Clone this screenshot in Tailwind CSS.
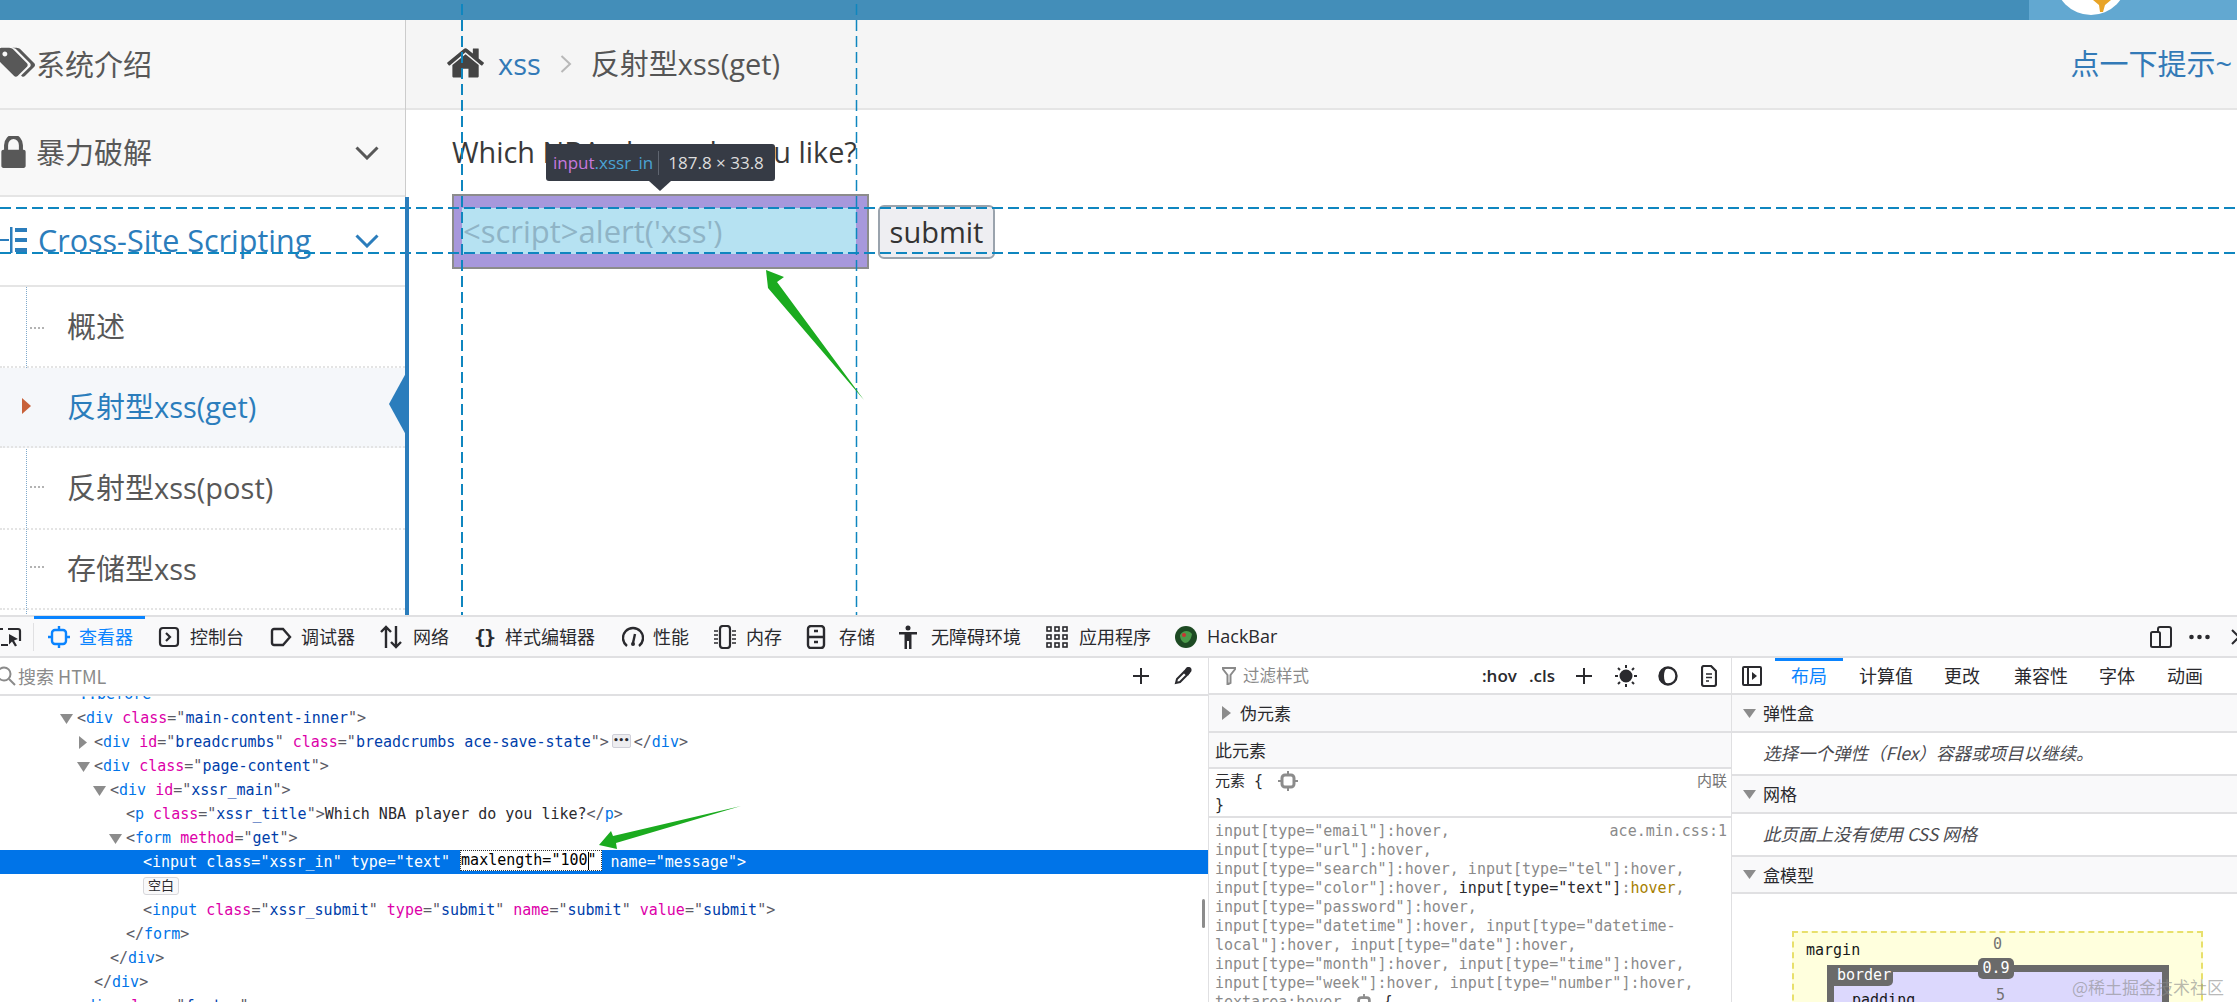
<!DOCTYPE html>
<html lang="en">
<head>
<meta charset="UTF-8">
<title>xss inspector</title>
<script src="https://cdn.jsdelivr.net/npm/@tailwindcss/browser@4"></script>
</head>
<body class="bg-white">
<div class="relative w-[2237px] h-[1002px] overflow-hidden bg-white text-[#393939] [font-family:'Open_Sans','Noto_Sans_CJK_SC',sans-serif]">

  <!-- page header -->
  <div class="flex h-[20px] bg-[#438eb9]">
    <div class="flex-1"></div>
    <div class="relative w-[208px] overflow-hidden bg-[#62a8d1]">
      <div class="absolute left-[26px] top-[-57px] w-[72px] h-[72px] rounded-full bg-white"></div>
      <svg class="absolute left-[62px] top-0" width="22" height="12" viewBox="0 0 22 12"><path d="M2 0h18l-6 5-2 7h-3l-1-7z" fill="#e8a427"/></svg>
    </div>
  </div>

  <!-- page body -->
  <div class="flex h-[595px]">
    <!-- sidebar -->
    <div class="w-[406px] shrink-0 border-r border-[#cccccc] text-[29px] text-[#585858]">
      <div class="flex items-center h-[90px] pt-[2px] bg-[#f8f8f8] border-b-[2px] border-[#e5e5e5]">
        <svg class="w-[35px] h-[35px] -mt-[6px] shrink-0" viewBox="0 0 1835 1792" fill="#585858"><path d="M384 448q0-53-37.500-90.500t-90.500-37.500-90.500 37.500-37.500 90.500 37.500 90.500 90.500 37.500 90.500-37.500 37.500-90.500zm1067 576q0 53-37 90l-491 492q-39 37-91 37-53 0-90-37l-715-716q-38-37-64.500-101t-26.500-117v-416q0-52 38-90t90-38h416q53 0 117 26.500t102 64.500l715 714q37 39 37 91zm384 0q0 53-37 90l-491 492q-39 37-91 37-36 0-59-14t-53-45l470-470q37-37 37-90 0-52-37-91l-715-714q-38-38-102-64.500t-117-26.500h224q53 0 117 26.500t102 64.500l715 714q37 39 37 91z"/></svg>
        <span class="ml-px">系统介绍</span>
      </div>
      <div class="flex items-center h-[87px] bg-[#f8f8f8] border-b-[2px] border-[#e5e5e5]">
        <svg class="w-[27px] h-[32px] -mt-[2px] shrink-0" viewBox="256 190 1280 1350" fill="#585858" preserveAspectRatio="none"><path d="M640 768h512v-192q0-106-75-181t-181-75-181 75-75 181v192zm832 96v576q0 40-28 68t-68 28h-960q-40 0-68-28t-28-68v-576q0-40 28-68t68-28h32v-192q0-184 132-316t316-132 316 132 132 316v192h32q40 0 68 28t28 68z"/></svg>
        <span class="ml-[9px]">暴力破解</span>
        <svg class="ml-auto mr-[26px] shrink-0" width="24" height="14" viewBox="0 0 24 14" fill="none" stroke="#585858" stroke-width="3"><path d="M1.500 1.500 12 12 22.500 1.500"/></svg>
      </div>
      <div class="flex items-center h-[90px] text-[#2b7dbc] border-b-[2px] border-[#e5e5e5]">
        <svg class="shrink-0 -mt-[2px]" width="30" height="30" viewBox="0 0 30 30" fill="#2b7dbc"><rect x="0" y="14" width="9" height="2"/><rect x="10" y="2" width="2.500" height="26"/><rect x="15" y="3" width="12" height="4"/><rect x="15" y="13" width="12" height="4"/><rect x="15" y="23" width="12" height="4"/></svg>
        <span class="ml-[8px] text-[30.500px]">Cross-Site Scripting</span>
        <svg class="ml-auto mr-[26px] shrink-0" width="24" height="14" viewBox="0 0 24 14" fill="none" stroke="#2b7dbc" stroke-width="3"><path d="M1.500 1.500 12 12 22.500 1.500"/></svg>
      </div>
      <div class="relative h-[327px]">
        <div class="absolute left-[26px] top-0 bottom-0 border-l border-dotted border-[#7fa9cc]"></div>
        <div class="flex items-center h-[81px] pl-[67px] border-b-2 border-dotted border-[#e4e4e4]">
          <span class="absolute left-[30px] top-[40px] w-[14px] border-t-2 border-dotted border-[#b3b3b3]"></span>概述
        </div>
        <div class="relative flex items-center h-[80px] pl-[67px] bg-[#f5f7fa] text-[#2b7dbc] border-b-2 border-dotted border-[#e4e4e4]">
          <svg class="absolute left-[22px] top-[30px]" width="9" height="16" viewBox="0 0 9 16"><path d="M0 0 9 8 0 16z" fill="#c86139"/></svg>
          反射型xss(get)
        </div>
        <div class="relative flex items-center h-[82px] pl-[67px] border-b-2 border-dotted border-[#e4e4e4]">
          <span class="absolute left-[30px] top-[38px] w-[14px] border-t-2 border-dotted border-[#b3b3b3]"></span>反射型xss(post)
        </div>
        <div class="relative flex items-center h-[80px] pl-[67px] border-b-2 border-dotted border-[#e4e4e4]">
          <span class="absolute left-[30px] top-[36px] w-[14px] border-t-2 border-dotted border-[#b3b3b3]"></span>存储型xss
        </div>
      </div>
    </div>

    <!-- main content -->
    <div class="flex-1 flex flex-col">
      <div class="flex items-center h-[90px] pl-[40px] pr-[5px] bg-[#f5f5f5] border-b-[2px] border-[#e5e5e5] text-[29px]">
        <svg class="shrink-0 -mt-[3px]" width="42" height="38" viewBox="0 0 1792 1664" fill="#444444"><path d="M1408 928v480q0 26-19 45t-45 19h-384v-384h-256v384h-384q-26 0-45-19t-19-45v-480q0-1 .5-3t.5-3l575-474 575 474q1 2 1 6zm223-69l-62 74q-8 9-21 11h-3q-13 0-21-7l-692-577-692 577q-12 8-24 7-13-2-21-11l-62-74q-8-10-7-23.500t11-21.500l719-599q32-26 76-26t76 26l244 204v-195q0-14 9-23t23-9h192q14 0 23 9t9 23v408l219 182q10 8 11 21.500t-7 23.500z"/></svg>
        <span class="ml-[10px] text-[#337ab7]">xss</span>
        <svg class="ml-[19px] shrink-0" width="12" height="18" viewBox="0 0 12 18" fill="none" stroke="#b8b8b8" stroke-width="2"><path d="M1.500 1 10 9l-8.500 8"/></svg>
        <span class="ml-[19px] text-[#555555]">反射型xss(get)</span>
        <span class="ml-auto text-[#337ab7]">点一下提示~</span>
      </div>
      <div class="pl-[46px] pt-[22px]">
        <p class="h-[40px] leading-[40px] text-[28.800px] text-[#393939]">Which NBA player do you like?</p>
        <form class="flex items-center mt-[22px] gap-[9px]">
          <div class="w-[417px] h-[75px] pl-[8px] pr-[11px] py-[12px] bg-[#a798dc] border-2 border-[#8c8c8c]">
            <div class="flex items-center h-[46px] pl-[1px] bg-[#b6e2f2] text-[31px] text-[#8fb4c6] whitespace-pre">&lt;script&gt;alert('xss')</div>
          </div>
          <div class="flex items-center justify-center w-[117px] h-[54px] bg-[#eeeef2] border-2 border-[#9aa3ad] rounded-[6px] text-[29px] text-[#333333]">submit</div>
        </form>
      </div>
    </div>
  </div>

  <!-- devtools -->
  <div class="flex flex-col h-[387px] border-t-2 border-[#e0e0e2] bg-white text-[18px] text-[#2a2a2e] [font-family:'Noto_Sans_CJK_SC','Open_Sans',sans-serif]">
    <div class="flex items-center h-[41px] bg-[#f9f9fa] border-b-2 border-[#e0e0e2]">
      <svg class="shrink-0" width="22" height="22" viewBox="0 0 22 22" fill="none" stroke="#2a2a2e" stroke-width="2.200"><path d="M8 3h10a2 2 0 0 1 2 2v10M0 3h3M8 19H1"/><path d="M9 8l9 5-4 1.500 3 5-2 1-3-5-3 3z" fill="#2a2a2e" stroke="none"/></svg>
      <div class="ml-[11px] w-px h-[28px] bg-[#e0e0e2]"></div>
      <div class="relative flex items-center w-[124px] h-full pl-[14px] text-[#0a84ff]">
        <span class="absolute left-0 top-[-1px] w-[111px] h-[3px] bg-[#0a84ff]"></span>
        <svg class="w-[22px] h-[22px] shrink-0" viewBox="0 0 22 22" fill="none" stroke="#0a84ff" stroke-width="2.400"><rect x="4" y="4" width="14" height="14" rx="3"/><path d="M11 0v4M11 18v4M0 11h4M18 11h4"/></svg>
        <span class="ml-[9px]">查看器</span>
      </div>
      <div class="flex items-center w-[112px] h-full">
        <svg class="w-[22px] h-[22px] shrink-0" viewBox="0 0 22 22" fill="none" stroke="#2a2a2e" stroke-width="2.200"><rect x="2" y="2" width="18" height="18" rx="3"/><path d="M8 7l4 4-4 4"/></svg>
        <span class="ml-[10px]">控制台</span>
      </div>
      <div class="flex items-center w-[110px] h-full">
        <svg class="w-[22px] h-[22px] shrink-0" viewBox="0 0 22 22" fill="none" stroke="#2a2a2e" stroke-width="2.400"><path d="M4 3h9l7 8-7 8H4a2 2 0 0 1-2-2V5a2 2 0 0 1 2-2z"/></svg>
        <span class="ml-[9px]">调试器</span>
      </div>
      <div class="flex items-center w-[93px] h-full">
        <svg class="w-[22px] h-[24px] shrink-0" viewBox="0 0 22 24" fill="none" stroke="#2a2a2e" stroke-width="2.400"><path d="M6 23V2M1 7l5-5 5 5M16 1v21M11 17l5 5 5-5"/></svg>
        <span class="ml-[11px]">网络</span>
      </div>
      <div class="flex items-center w-[149px] h-full">
        <span class="w-[22px] text-center font-bold [font-family:'DejaVu_Sans_Mono',monospace] tracking-[-2px] text-[20px]">{}</span>
        <span class="ml-[10px]">样式编辑器</span>
      </div>
      <div class="flex items-center w-[92px] h-full">
        <svg class="w-[22px] h-[24px] shrink-0" viewBox="0 0 22 24" fill="none" stroke="#2a2a2e" stroke-width="2.400"><path d="M5 21a10 10 0 1 1 12 0"/><path d="M13 9l-2 9"/><circle cx="11" cy="19" r="2" fill="#2a2a2e" stroke="none"/></svg>
        <span class="ml-[9px]">性能</span>
      </div>
      <div class="flex items-center w-[92px] h-full">
        <svg class="w-[22px] h-[24px] shrink-0" viewBox="0 0 22 24" fill="none" stroke="#2a2a2e" stroke-width="2.200"><rect x="6" y="1" width="10" height="22" rx="3"/><path d="M0 6h4M0 10h4M0 14h4M0 18h4M18 6h4M18 10h4M18 14h4M18 18h4" stroke-width="1.600"/></svg>
        <span class="ml-[10px]">内存</span>
      </div>
      <div class="flex items-center w-[92px] h-full">
        <svg class="w-[20px] h-[24px] shrink-0 mr-[2px]" viewBox="0 0 20 24" fill="none" stroke="#2a2a2e" stroke-width="2.400"><rect x="2" y="1" width="16" height="22" rx="3"/><path d="M2 12h16M8 6h4M8 17h4"/></svg>
        <span class="ml-[11px]">存储</span>
      </div>
      <div class="flex items-center w-[148px] h-full">
        <svg class="w-[20px] h-[24px] shrink-0 mr-[2px]" viewBox="0 0 20 24" fill="#2a2a2e"><circle cx="10" cy="3" r="2.500"/><path d="M1 7h18v2.500h-5.500V24h-2.500v-8H9v8H6.500V9.500H1z"/></svg>
        <span class="ml-[11px]">无障碍环境</span>
      </div>
      <div class="flex items-center w-[129px] h-full">
        <svg class="w-[22px] h-[22px] shrink-0" viewBox="0 0 22 22" fill="none" stroke="#2a2a2e" stroke-width="1.600"><rect x="1" y="1" width="4" height="4"/><rect x="9" y="1" width="4" height="4"/><rect x="17" y="1" width="4" height="4"/><rect x="1" y="9" width="4" height="4"/><rect x="9" y="9" width="4" height="4"/><rect x="17" y="9" width="4" height="4"/><rect x="1" y="17" width="4" height="4"/><rect x="9" y="17" width="4" height="4"/><rect x="17" y="17" width="4" height="4"/></svg>
        <span class="ml-[11px]">应用程序</span>
      </div>
      <div class="flex items-center h-full">
        <svg class="w-[22px] h-[22px] shrink-0" viewBox="0 0 22 22"><circle cx="11" cy="11" r="11" fill="#1d4a23"/><path d="M5 9c3-5 9-5 12-1-1 6-4 9-7 9-3-1-5-4-5-8z" fill="#4b9a4a"/><circle cx="9" cy="9" r="2" fill="#c33"/></svg>
        <span class="ml-[10px] [font-family:'Open_Sans',sans-serif]">HackBar</span>
      </div>
      <svg class="ml-auto shrink-0" width="22" height="22" viewBox="0 0 22 22" fill="none" stroke="#2a2a2e" stroke-width="2"><rect x="8" y="1" width="13" height="20" rx="2"/><rect x="1" y="6" width="9" height="15" rx="1.500" fill="#f9f9fa"/></svg>
      <svg class="ml-[17px] mr-[-2px] shrink-0" width="50" height="22" viewBox="0 0 50 22" fill="#2a2a2e"><circle cx="2.500" cy="11" r="2.300"/><circle cx="10.500" cy="11" r="2.300"/><circle cx="18.500" cy="11" r="2.300"/><path d="M43 4l7 7-7 7" fill="none" stroke="#2a2a2e" stroke-width="2"/></svg>
    </div>

    <div class="flex flex-1 min-h-0">
      <!-- markup pane -->
      <div class="relative flex flex-col w-[1208px] shrink-0">
        <div class="flex items-center h-[38px] shrink-0 bg-white border-b-2 border-[#e0e0e2] z-10">
          <svg class="-ml-[4px] shrink-0" width="20" height="20" viewBox="0 0 20 20" fill="none" stroke="#8a8a8a" stroke-width="2"><circle cx="8" cy="8" r="6.500"/><path d="M13 13l6 6"/></svg>
          <span class="ml-[2px] text-[#8a8a8a]">搜索 HTML</span>
          <svg class="ml-auto shrink-0" width="18" height="18" viewBox="0 0 18 18" stroke="#2a2a2e" stroke-width="2"><path d="M9 1v16M1 9h16"/></svg>
          <svg class="ml-[24px] mr-[16px] shrink-0" width="18" height="18" viewBox="0 0 18 18" fill="none" stroke="#2a2a2e" stroke-width="2"><path d="M11 3l4 4M2 16l1-4 7-7 3 3-7 7z"/><path d="M11 4l2-2.500c1-1 2.500-.5 3 0s1 2 0 3L14 7z" fill="#2a2a2e"/></svg>
        </div>
        <div class="-mt-[14px] text-[15px] leading-6 text-[#5b5b66] [font-family:'DejaVu_Sans_Mono','Noto_Sans_CJK_SC',monospace]">
          <div class="h-6 pl-[79px] whitespace-pre text-[#0074e8]">::before</div>
          <div class="h-6 pl-[77px] whitespace-pre"><svg class="inline -ml-[17px] mr-[4px]" width="13" height="10" viewBox="0 0 13 10"><path d="M0 0h13L6.500 10z" fill="#8c8c8c"/></svg>&lt;<span class="text-[#0074e8]">div</span> <span class="text-[#dd00a9]">class</span>="<span class="text-[#003eaa]">main-content-inner</span>"&gt;</div>
          <div class="h-6 pl-[94px] whitespace-pre"><svg class="inline -ml-[15px] mr-[7px]" width="8" height="13" viewBox="0 0 8 13"><path d="M0 0l8 6.500L0 13z" fill="#8c8c8c"/></svg>&lt;<span class="text-[#0074e8]">div</span> <span class="text-[#dd00a9]">id</span>="<span class="text-[#003eaa]">breadcrumbs</span>" <span class="text-[#dd00a9]">class</span>="<span class="text-[#003eaa]">breadcrumbs ace-save-state</span>"&gt;<span class="inline-block align-middle w-[19px] h-[14px] mx-[3px] -mt-[3px] bg-[#ededf0] border border-[#cfcfd8] rounded-[2px] text-center text-[9px] leading-[11px] font-bold text-[#2a2a2e]">•••</span>&lt;/<span class="text-[#0074e8]">div</span>&gt;</div>
          <div class="h-6 pl-[94px] whitespace-pre"><svg class="inline -ml-[17px] mr-[4px]" width="13" height="10" viewBox="0 0 13 10"><path d="M0 0h13L6.500 10z" fill="#8c8c8c"/></svg>&lt;<span class="text-[#0074e8]">div</span> <span class="text-[#dd00a9]">class</span>="<span class="text-[#003eaa]">page-content</span>"&gt;</div>
          <div class="h-6 pl-[110px] whitespace-pre"><svg class="inline -ml-[17px] mr-[4px]" width="13" height="10" viewBox="0 0 13 10"><path d="M0 0h13L6.500 10z" fill="#8c8c8c"/></svg>&lt;<span class="text-[#0074e8]">div</span> <span class="text-[#dd00a9]">id</span>="<span class="text-[#003eaa]">xssr_main</span>"&gt;</div>
          <div class="h-6 pl-[126px] whitespace-pre">&lt;<span class="text-[#0074e8]">p</span> <span class="text-[#dd00a9]">class</span>="<span class="text-[#003eaa]">xssr_title</span>"&gt;<span class="text-[#2a2a2e]">Which NBA player do you like?</span>&lt;/<span class="text-[#0074e8]">p</span>&gt;</div>
          <div class="h-6 pl-[126px] whitespace-pre"><svg class="inline -ml-[17px] mr-[4px]" width="13" height="10" viewBox="0 0 13 10"><path d="M0 0h13L6.500 10z" fill="#8c8c8c"/></svg>&lt;<span class="text-[#0074e8]">form</span> <span class="text-[#dd00a9]">method</span>="<span class="text-[#003eaa]">get</span>"&gt;</div>
          <div class="h-6 pl-[143px] whitespace-pre bg-[#0074e8] text-white">&lt;input class="xssr_in" type="text" <span class="inline-block align-top h-[21px] leading-[19px] pr-[4px] mr-[9px] ml-[1px] bg-white text-black border border-dotted border-[#333333]">maxlength="100"</span>name="message"&gt;</div>
          <div class="flex items-center h-6 pl-[143px]"><span class="flex items-center justify-center w-[36px] h-[18px] bg-[#f9f9fa] border border-[#d7d7db] rounded-[3px] text-[13px] text-[#2a2a2e]">空白</span></div>
          <div class="h-6 pl-[143px] whitespace-pre">&lt;<span class="text-[#0074e8]">input</span> <span class="text-[#dd00a9]">class</span>="<span class="text-[#003eaa]">xssr_submit</span>" <span class="text-[#dd00a9]">type</span>="<span class="text-[#003eaa]">submit</span>" <span class="text-[#dd00a9]">name</span>="<span class="text-[#003eaa]">submit</span>" <span class="text-[#dd00a9]">value</span>="<span class="text-[#003eaa]">submit</span>"&gt;</div>
          <div class="h-6 pl-[126px] whitespace-pre">&lt;/<span class="text-[#0074e8]">form</span>&gt;</div>
          <div class="h-6 pl-[110px] whitespace-pre">&lt;/<span class="text-[#0074e8]">div</span>&gt;</div>
          <div class="h-6 pl-[94px] whitespace-pre">&lt;/<span class="text-[#0074e8]">div</span>&gt;</div>
          <div class="h-6 pl-[77px] whitespace-pre">&lt;<span class="text-[#0074e8]">div</span> <span class="text-[#dd00a9]">class</span>="<span class="text-[#003eaa]">footer</span>"&gt;</div>
        </div>
        <div class="absolute right-[3px] top-[241px] w-[3px] h-[29px] rounded bg-[#8c8c8c]"></div>
      </div>

      <!-- rules pane -->
      <div class="flex flex-col w-[524px] shrink-0 border-x border-[#e0e0e2] overflow-hidden">
        <div class="flex items-center h-[37px] shrink-0 border-b-2 border-[#e0e0e2] pl-[13px]">
          <svg class="shrink-0" width="14" height="18" viewBox="0 0 14 18"><path d="M0 1h14L8.500 8v8l-3 1.500V8z" fill="none" stroke="#8a8a8a" stroke-width="2"/></svg>
          <span class="ml-[7px] text-[#8a8a8a] text-[16.500px]">过滤样式</span>
          <span class="ml-auto font-semibold text-[17px] [font-family:'Open_Sans',sans-serif]">:hov</span>
          <span class="ml-[12px] font-semibold text-[17px] [font-family:'Open_Sans',sans-serif]">.cls</span>
          <svg class="ml-[20px] shrink-0" width="18" height="18" viewBox="0 0 18 18" stroke="#2a2a2e" stroke-width="2"><path d="M9 1v16M1 9h16"/></svg>
          <svg class="ml-[22px] shrink-0" width="22" height="22" viewBox="0 0 22 22" stroke="#2a2a2e" stroke-width="2"><circle cx="11" cy="11" r="5.500" fill="#2a2a2e"/><path d="M11 0v3M11 19v3M0 11h3M19 11h3M3 3l2 2M17 17l2 2M3 19l2-2M17 5l2-2"/></svg>
          <svg class="ml-[21px] shrink-0" width="20" height="20" viewBox="0 0 20 20"><circle cx="10" cy="10" r="8.500" fill="none" stroke="#2a2a2e" stroke-width="2.400"/><path d="M10 1a9 9 0 0 1 0 18c3-2 4-5 4-9s-1-7-4-9z" fill="#2a2a2e" transform="rotate(180 10 10)"/></svg>
          <svg class="ml-[23px] mr-[14px] shrink-0" width="16" height="22" viewBox="0 0 16 22" fill="none" stroke="#2a2a2e" stroke-width="2.200"><path d="M3 1h7l5 5v13a2 2 0 0 1-2 2H3a2 2 0 0 1-2-2V3a2 2 0 0 1 2-2z"/><path d="M5 9h6M5 12.500h6M5 16h3" stroke-width="1.500"/></svg>
        </div>
        <div class="flex items-center h-[38px] shrink-0 pl-[13px] bg-[#f9f9fa] border-b-2 border-[#e0e0e2]">
          <svg class="shrink-0" width="9" height="14" viewBox="0 0 9 14"><path d="M0 0l9 7-9 7z" fill="#8c8c8c"/></svg>
          <span class="ml-[9px] text-[17px]">伪元素</span>
        </div>
        <div class="flex items-center h-[36px] shrink-0 pl-[6px] bg-[#f9f9fa] border-b-2 border-[#e0e0e2] text-[17px]">此元素</div>
        <div class="h-[49px] shrink-0 pl-[6px] pr-[4px] border-b-2 border-[#e0e0e2] text-[15px] leading-[24px] text-[#2a2a2e] [font-family:'DejaVu_Sans_Mono','Noto_Sans_CJK_SC',monospace]">
          <div class="flex items-center h-[24px]"><span class="whitespace-pre">元素 {</span><svg class="ml-[15px] shrink-0" width="20" height="20" viewBox="0 0 20 20" fill="none" stroke="#8c8c8c" stroke-width="3"><rect x="4" y="4" width="12" height="12" rx="3"/><path d="M10 0v4M10 16v4M0 10h4M16 10h4" stroke-width="2"/></svg><span class="ml-auto text-[#737373]">内联</span></div>
          <div class="h-[24px]">}</div>
        </div>
        <div class="relative pl-[6px] pt-[4px] text-[15px] leading-[19px] text-[#8a8a8a] [font-family:'DejaVu_Sans_Mono','Noto_Sans_CJK_SC',monospace]">
          <span class="absolute right-[4px] top-[4px]">ace.min.css:1</span>
          <div class="whitespace-pre">input[type="email"]:hover,</div>
          <div class="whitespace-pre">input[type="url"]:hover,</div>
          <div class="whitespace-pre">input[type="search"]:hover, input[type="tel"]:hover,</div>
          <div class="whitespace-pre">input[type="color"]:hover, <span class="text-[#2a2a2e]">input[type="text"]</span>:<span class="text-[#a68000]">hover</span>,</div>
          <div class="whitespace-pre">input[type="password"]:hover,</div>
          <div class="whitespace-pre">input[type="datetime"]:hover, input[type="datetime-</div>
          <div class="whitespace-pre">local"]:hover, input[type="date"]:hover,</div>
          <div class="whitespace-pre">input[type="month"]:hover, input[type="time"]:hover,</div>
          <div class="whitespace-pre">input[type="week"]:hover, input[type="number"]:hover,</div>
          <div class="flex items-center h-[19px] whitespace-pre">textarea:hover<svg class="ml-[14px] shrink-0" width="18" height="18" viewBox="0 0 20 20" fill="none" stroke="#8c8c8c" stroke-width="3"><rect x="4" y="4" width="12" height="12" rx="3"/><path d="M10 0v4M10 16v4M0 10h4M16 10h4" stroke-width="2"/></svg><span class="ml-[10px] text-[#2a2a2e]">{</span></div>
        </div>
      </div>

      <!-- layout pane -->
      <div class="flex-1 flex flex-col min-w-0 overflow-hidden">
        <div class="flex items-center h-[37px] shrink-0 border-b-2 border-[#e0e0e2] text-[18px]">
          <svg class="ml-[10px] shrink-0" width="20" height="20" viewBox="0 0 20 20" fill="none" stroke="#2a2a2e" stroke-width="2"><rect x="1" y="1" width="18" height="18" rx="1"/><path d="M6 1v18"/><path d="M10 6l5 4-5 4z" fill="#2a2a2e" stroke="none"/></svg>
          <div class="relative flex items-center justify-center ml-[13px] w-[68px] h-full text-[#0a84ff]"><span class="absolute left-0 top-0 w-full h-[3px] bg-[#0a84ff]"></span>布局</div>
          <span class="ml-[16px]">计算值</span>
          <span class="ml-[31px]">更改</span>
          <span class="ml-[34px]">兼容性</span>
          <span class="ml-[31px]">字体</span>
          <span class="ml-[32px]">动画</span>
        </div>
        <div class="flex items-center h-[38px] shrink-0 pl-[11px] bg-[#f9f9fa] border-b-2 border-[#e0e0e2] text-[17px]"><svg class="shrink-0" width="13" height="9" viewBox="0 0 13 9"><path d="M0 0h13L6.500 9z" fill="#8c8c8c"/></svg><span class="ml-[7px]">弹性盒</span></div>
        <div class="flex items-center h-[43px] shrink-0 pl-[31px] border-b-2 border-[#e0e0e2] italic text-[17.500px] text-[#4a4a4f]">选择一个弹性（Flex）容器或项目以继续。</div>
        <div class="flex items-center h-[38px] shrink-0 pl-[11px] bg-[#f9f9fa] border-b-2 border-[#e0e0e2] text-[17px]"><svg class="shrink-0" width="13" height="9" viewBox="0 0 13 9"><path d="M0 0h13L6.500 9z" fill="#8c8c8c"/></svg><span class="ml-[7px]">网格</span></div>
        <div class="flex items-center h-[43px] shrink-0 pl-[31px] border-b-2 border-[#e0e0e2] italic text-[17.500px] text-[#4a4a4f]">此页面上没有使用 CSS 网格</div>
        <div class="flex items-center h-[37px] shrink-0 pl-[11px] bg-[#f9f9fa] border-b-2 border-[#e0e0e2] text-[17px]"><svg class="shrink-0" width="13" height="9" viewBox="0 0 13 9"><path d="M0 0h13L6.500 9z" fill="#8c8c8c"/></svg><span class="ml-[7px]">盒模型</span></div>
        <!-- box model -->
        <div class="pl-[60px] pt-[37px] text-[15px] [font-family:'DejaVu_Sans_Mono',monospace]">
          <div class="relative w-[411px] h-[80px] bg-[#ffffdd] border-2 border-b-0 border-dashed border-[#e8e06c] pl-[33px] pt-[32px]">
            <span class="absolute left-[12px] top-[6px] text-[#18191a]">margin</span>
            <span class="absolute left-[199px] top-0 text-[#737373]">0</span>
            <div class="relative w-[342px] h-[60px] bg-[#dcd8fd] border-[7px] border-b-0 border-[#6a6a6a]">
              <span class="absolute -left-[2px] -top-[7px] w-[61px] h-[21px] pl-[5px] leading-[20px] bg-[#6a6a6a] rounded-br-[5px] text-white">border</span>
              <span class="absolute left-[144px] -top-[14px] w-[36px] h-[21px] leading-[21px] text-center bg-[#6a6a6a] rounded-[5px] text-white">0.9</span>
              <span class="absolute left-[18px] top-[17px] text-[#18191a]">padding</span>
              <span class="absolute left-[162px] top-[12px] text-[#737373]">5</span>
            </div>
          </div>
        </div>
      </div>
    </div>
  </div>

  <!-- inspector highlight guides and annotation arrows -->
  <svg class="absolute left-0 top-0 pointer-events-none" width="2237" height="1002" viewBox="0 0 2237 1002">
    <g stroke="#0f86bf" fill="none">
      <line x1="462" y1="4" x2="462" y2="615" stroke-width="2" stroke-dasharray="11 5"/>
      <line x1="856.500" y1="4" x2="856.500" y2="615" stroke-width="1.500" stroke-dasharray="11 5"/>
      <line x1="0" y1="208" x2="2237" y2="208" stroke-width="2" stroke-dasharray="11 5"/>
      <line x1="0" y1="253" x2="2237" y2="253" stroke-width="2" stroke-dasharray="11 5"/>
    </g>
    <path d="M766 270 784 277 777 282 864 400 768 288z" fill="#1bab1f"/>
    <path d="M741 806 613 836 611 831 599 845 617 849 616 843z" fill="#1bab1f"/>
  </svg>

  <!-- text caret in the attribute being edited -->
  <div class="absolute left-[588px] top-[852px] w-px h-[18px] bg-black"></div>

  <!-- element tooltip -->
  <div class="absolute left-[546px] top-[144px] flex items-center w-[229px] h-[37px] pl-[7px] bg-[#363b45] rounded-[3px] text-[17px] [font-family:'Open_Sans',sans-serif]">
    <span class="text-[#c678dd]">input</span><span class="text-[#4aa3d4]">.xssr_in</span>
    <span class="ml-[5px] w-px h-[24px] bg-[#5f6570]"></span>
    <span class="ml-[9px] text-[#dddddd]">187.8 × 33.8</span>
  </div>
  <div class="absolute left-[649px] top-[181px] w-0 h-0 border-x-[11px] border-x-transparent border-t-[10px] border-t-[#363b45]"></div>

  <!-- blue marker of the current menu item -->
  <div class="absolute left-[389px] top-[373px] w-[17px] h-[62px] bg-[#2b7dbc] [clip-path:polygon(100%_0,100%_100%,0_50%)]"></div>
  <div class="absolute left-[405px] top-[197px] w-[4px] h-[418px] bg-[#2b7dbc]"></div>

  <!-- site watermark -->
  <span class="absolute left-[2072px] top-[974px] text-[17px] text-[#8a8a8a]/60 [font-family:'Noto_Sans_CJK_SC',sans-serif]">@稀土掘金技术社区</span>
</div>
</body>
</html>
